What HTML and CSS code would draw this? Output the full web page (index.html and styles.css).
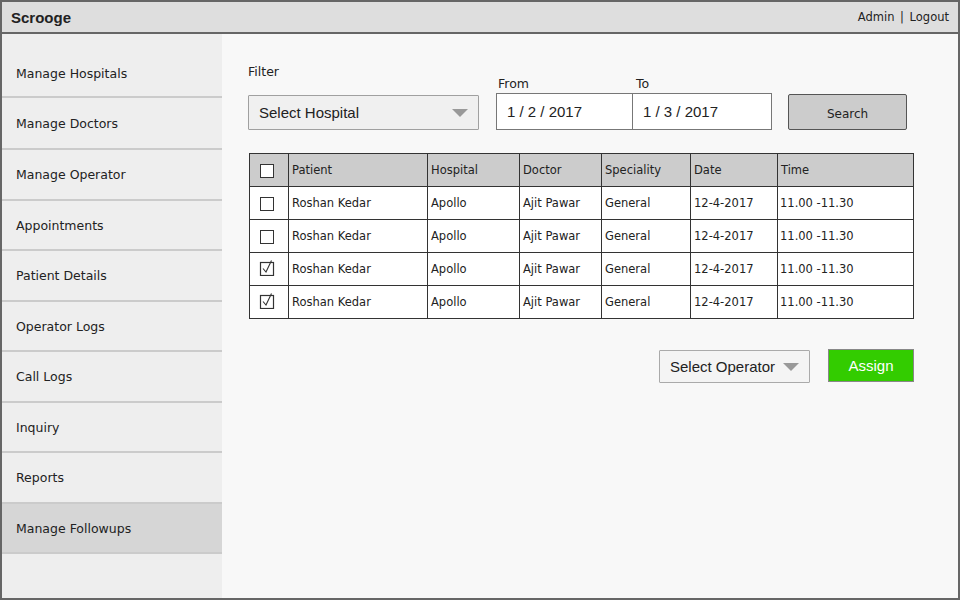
FILE: index.html
```html
<!DOCTYPE html>
<html>
<head>
<meta charset="utf-8">
<link rel="stylesheet" href="styles.css">
</head>
<body>
<div class="app">
  <header class="topbar">
    <span class="brand">Scrooge</span>
    <span class="user">Admin <span class="sep">|</span> Logout</span>
  </header>
  <div class="layout">
    <nav class="sidebar">
      <div class="nav-item first">Manage Hospitals</div>
      <div class="nav-item second">Manage Doctors</div>
      <div class="nav-item">Manage Operator</div>
      <div class="nav-item">Appointments</div>
      <div class="nav-item">Patient Details</div>
      <div class="nav-item">Operator Logs</div>
      <div class="nav-item">Call Logs</div>
      <div class="nav-item">Inquiry</div>
      <div class="nav-item">Reports</div>
      <div class="nav-item active">Manage Followups</div>
    </nav>
    <main class="main">
      <div class="filters">
        <div class="field-hospital">
          <div class="label filter-label">Filter</div>
          <div class="select hospital">Select Hospital<span class="arrow"></span></div>
        </div>
        <div class="dates">
          <div class="label">From</div>
          <div class="label to-label">To</div>
          <div class="date-input">1 / 2 / 2017</div>
          <div class="date-input last">1 / 3 / 2017</div>
        </div>
        <button class="btn-search">Search</button>
      </div>

      <table class="grid">
        <colgroup>
          <col class="c0"><col class="c1"><col class="c2"><col class="c3"><col class="c4"><col class="c5"><col class="c6">
        </colgroup>
        <thead>
          <tr>
            <th class="chk"><span class="box"></span></th>
            <th>Patient</th><th>Hospital</th><th>Doctor</th><th>Speciality</th><th>Date</th><th>Time</th>
          </tr>
        </thead>
        <tbody>
          <tr>
            <td class="chk"><span class="box"></span></td>
            <td>Roshan Kedar</td><td>Apollo</td><td>Ajit Pawar</td><td>General</td><td>12-4-2017</td><td class="time">11.00 -11.30</td>
          </tr>
          <tr>
            <td class="chk"><span class="box"></span></td>
            <td>Roshan Kedar</td><td>Apollo</td><td>Ajit Pawar</td><td>General</td><td>12-4-2017</td><td class="time">11.00 -11.30</td>
          </tr>
          <tr>
            <td class="chk"><svg class="check" width="16" height="17" viewBox="0 0 16 17"><rect x="1.5" y="3.5" width="13" height="13" fill="#fff" stroke="#333" stroke-width="1.2"/><path d="M4 9.5 L7 13 L12.5 1.5" fill="none" stroke="#333" stroke-width="1.1"/></svg></td>
            <td>Roshan Kedar</td><td>Apollo</td><td>Ajit Pawar</td><td>General</td><td>12-4-2017</td><td class="time">11.00 -11.30</td>
          </tr>
          <tr>
            <td class="chk"><svg class="check" width="16" height="17" viewBox="0 0 16 17"><rect x="1.5" y="3.5" width="13" height="13" fill="#fff" stroke="#333" stroke-width="1.2"/><path d="M4 9.5 L7 13 L12.5 1.5" fill="none" stroke="#333" stroke-width="1.1"/></svg></td>
            <td>Roshan Kedar</td><td>Apollo</td><td>Ajit Pawar</td><td>General</td><td>12-4-2017</td><td class="time">11.00 -11.30</td>
          </tr>
        </tbody>
      </table>

      <div class="actions">
        <div class="select operator">Select Operator<span class="arrow"></span></div>
        <button class="btn-assign">Assign</button>
      </div>
    </main>
  </div>
</div>
</body>
</html>
```

FILE: styles.css
```css
html, body {
  margin: 0;
  padding: 0;
}
body {
  width: 960px;
  height: 600px;
  font-family: "DejaVu Sans", "Noto Sans", sans-serif;
  color: #222;
}
.app {
  width: 960px;
  height: 600px;
  box-sizing: border-box;
  border: 2px solid #666;
  display: flex;
  flex-direction: column;
  background: #f8f8f8;
}
.topbar {
  height: 30px;
  flex: none;
  background: #dedede;
  border-bottom: 2px solid #666;
  display: flex;
  align-items: center;
  justify-content: space-between;
  padding: 0 9px 0 9px;
}
.brand {
  font-family: "Liberation Sans", Arial, sans-serif;
  font-weight: bold;
  font-size: 15px;
  color: #222;
}
.user {
  font-size: 11.5px;
  color: #222;
}
.user .sep { margin: 0 2px; }
.layout {
  flex: 1;
  display: flex;
  min-height: 0;
}
.sidebar {
  width: 220px;
  flex: none;
  background: #eeeeee;
  display: flex;
  flex-direction: column;
}
.nav-item {
  height: 50.5px;
  box-sizing: border-box;
  border-bottom: 2px solid #cbcbcb;
  display: flex;
  align-items: center;
  padding-left: 14px;
  padding-top: 1px;
  font-size: 12.5px;
  color: #222;
}
.nav-item.first {
  height: 64px;
  align-items: flex-end;
  padding-bottom: 15px;
}
.nav-item.second { height: 52px; }
.nav-item.active { background: #d6d6d6; }
.main {
  flex: 1;
  padding: 30px 44px 0 26px;
  display: flex;
  flex-direction: column;
}
.filters {
  display: flex;
  align-items: flex-end;
}
.label {
  font-size: 12.5px;
  color: #222;
}
.field-hospital {
  display: flex;
  flex-direction: column;
}
.filter-label {
  margin-bottom: 16px;
}
.select {
  position: relative;
  box-sizing: border-box;
  background: #f0f0f0;
  border: 1px solid #a0a0a0;
  border-radius: 1px;
  font-family: "Liberation Sans", Arial, sans-serif;
  font-size: 15px;
  color: #222;
  display: flex;
  align-items: center;
}
.select.hospital {
  width: 231px;
  height: 35px;
  padding-left: 10px;
}
.arrow {
  position: absolute;
  right: 10px;
  top: 50%;
  margin-top: -4px;
  width: 0;
  height: 0;
  border-left: 8px solid transparent;
  border-right: 8px solid transparent;
  border-top: 8px solid #999;
}
.dates {
  margin-left: 17px;
  display: grid;
  grid-template-columns: 137px 139px;
  row-gap: 2px;
}
.dates .label { padding-left: 2px; }
.dates .to-label { padding-left: 3px; }
.date-input {
  height: 37px;
  box-sizing: border-box;
  background: #fff;
  border: 1px solid #777;
  font-family: "Liberation Sans", Arial, sans-serif;
  font-size: 15px;
  color: #222;
  display: flex;
  align-items: center;
  padding-left: 10px;
}
.date-input.last { border-left: none; }
.btn-search {
  margin-left: 16px;
  width: 119px;
  height: 36px;
  box-sizing: border-box;
  background: #cccccc;
  border: 1px solid #555;
  border-radius: 2px;
  font-family: "DejaVu Sans", sans-serif;
  font-size: 12px;
  color: #222;
  padding: 3px 0 0 0;
}
.grid {
  margin-top: 23px;
  margin-left: 1px;
  width: 664px;
  border-collapse: collapse;
  table-layout: fixed;
  background: #fff;
  border: 1px solid #333;
}
.c0 { width: 39px; }
.c1 { width: 139px; }
.c2 { width: 92px; }
.c3 { width: 82px; }
.c4 { width: 89px; }
.c5 { width: 87px; }
.c6 { width: 136px; }
.grid th, .grid td {
  border: 1px solid #333;
  height: 32px;
  padding: 0 0 0 3px;
  text-align: left;
  font-weight: normal;
  font-size: 11.5px;
  color: #222;
  white-space: nowrap;
}
.grid th {
  background: #cccccc;
}
.grid td.time { padding-left: 2px; }
.grid .chk {
  padding: 0;
  text-align: center;
  vertical-align: middle;
}
.box {
  display: inline-block;
  width: 12px;
  height: 12px;
  border: 1.3px solid #333;
  background: #fff;
  vertical-align: middle;
  margin-left: -5px;
  margin-top: 2px;
}
.check {
  display: inline-block;
  vertical-align: middle;
  margin-left: -5px;
  margin-top: -3px;
}
.actions {
  margin-top: 30px;
  display: flex;
  justify-content: flex-end;
  align-items: flex-start;
  gap: 18px;
}
.select.operator {
  width: 151px;
  height: 33px;
  margin-top: 1px;
  background: #f4f4f4;
  border-color: #aaa;
  padding-left: 10px;
}
.btn-assign {
  width: 86px;
  height: 33px;
  box-sizing: border-box;
  background: #33cc00;
  border: 1px solid #888;
  color: #fff;
  font-family: "Liberation Sans", Arial, sans-serif;
  font-size: 15px;
  padding: 0;
}
```
